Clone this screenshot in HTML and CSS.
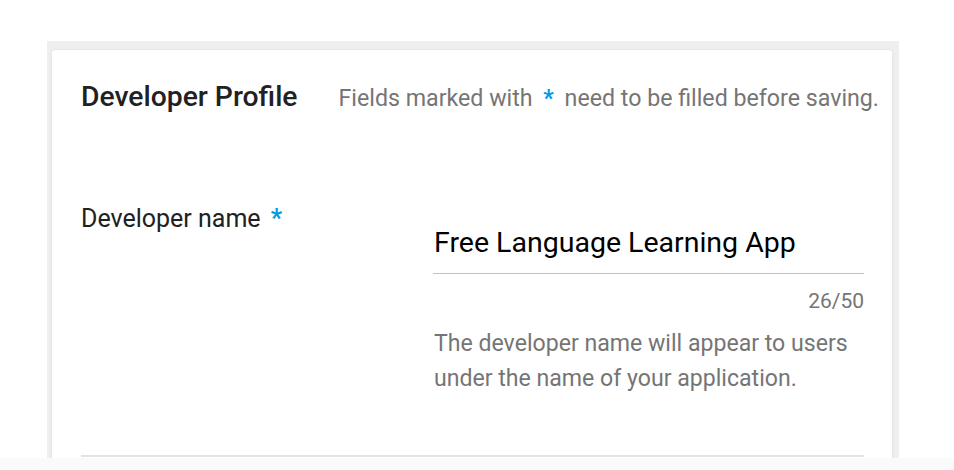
FILE: index.html
```html
<!DOCTYPE html>
<html lang="en">
<head>
<meta charset="utf-8">
<title>Developer Profile</title>
<link rel="stylesheet" href="styles.css">
</head>
<body>
<div class="page">
  <div class="frame">
    <section class="card">
      <header class="card-header">
        <h1 class="title">Developer Profile</h1>
        <p class="subtitle">Fields marked with <span class="req">*</span> need to be filled before saving.</p>
      </header>
      <div class="field-row">
        <label class="field-label" for="devname">Developer name <span class="req">*</span></label>
        <div class="field-body">
          <div class="input-wrap">
            <input id="devname" class="text-input" type="text" value="Free Language Learning App">
          </div>
          <div class="counter">26/50</div>
          <p class="help">The developer name will appear to users under the name of your application.</p>
        </div>
      </div>
      <div class="divider"></div>
    </section>
  </div>
</div>
<div class="strip"></div>
</body>
</html>
```

FILE: styles.css
```css
html, body {
  margin: 0;
  padding: 0;
  background: #ffffff;
  font-family: Roboto, "Noto Sans", "Liberation Sans", sans-serif;
}

.page {
  padding: 41px 0 0 47px;
}

.frame {
  width: 852px;
  height: 417px;
  box-sizing: border-box;
  background: #efefef;
  padding: 9px 7px 0 5px;
  overflow: hidden;
}

.card {
  background: #ffffff;
  border-radius: 3px 3px 0 0;
  box-shadow: 0 0 3px rgba(0, 0, 0, 0.10);
  height: 420px;
  box-sizing: border-box;
  padding: 29px 28px 0 29px;
}

.card-header {
  display: flex;
  align-items: baseline;
  gap: 41px;
  white-space: nowrap;
}

.title {
  flex: none;
  margin: 0;
  font-size: 28.3px;
  line-height: 36px;
  font-weight: 500;
  color: #212121;
}

.subtitle {
  flex: none;
  margin: 0;
  font-size: 23.2px;
  line-height: 36px;
  color: #757575;
}

.req {
  color: #039be5;
  font-weight: 700;
  padding: 0 5px;
}

.field-row {
  display: flex;
  margin-top: 87px;
}

.field-label {
  width: 352px;
  flex: none;
  font-size: 25px;
  line-height: 32px;
  color: #212121;
}

.field-label .req {
  padding: 0 0 0 4px;
}

.field-body {
  flex: 1;
  padding-top: 22px;
}

.input-wrap {
  border-bottom: 1px solid #c2c2c2;
  padding-bottom: 12px;
}

.text-input {
  display: block;
  width: 100%;
  box-sizing: border-box;
  border: 0;
  outline: none;
  padding: 0 0 0 1px;
  margin: 0;
  background: transparent;
  font-family: inherit;
  font-size: 28.5px;
  line-height: 36px;
  height: 36px;
  color: #000000;
}

.counter {
  text-align: right;
  margin-top: 14px;
  font-size: 21px;
  line-height: 26px;
  color: #757575;
}

.help {
  margin: 12px 0 0 1px;
  font-size: 23.1px;
  line-height: 35px;
  color: #757575;
  max-width: 420px;
}

.divider {
  margin-top: 59px;
  height: 2px;
  background: #e3e3e3;
}

.strip {
  height: 12px;
  background: #fafafa;
}
```
